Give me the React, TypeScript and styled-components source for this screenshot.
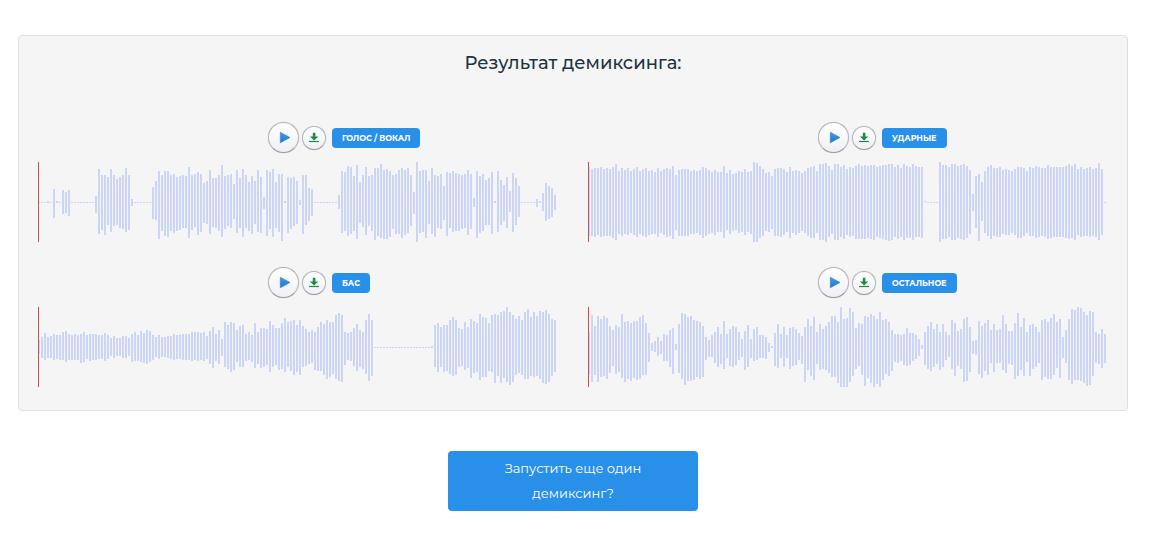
import React from "react";
import styled, { createGlobalStyle } from "styled-components";

const GlobalStyle = createGlobalStyle`
  *, *::before, *::after { box-sizing: border-box; }
  body {
    margin: 0;
    background: #ffffff;
    color: #1e333f;
    font-family: Montserrat, Inter, "Open Sans", sans-serif;
  }
`;

const Page = styled.main`
  display: flex;
  flex-direction: column;
  gap: 40px;
  padding: 35px 38px 22px 18px;
`;

const Panel = styled.section`
  padding: 14px 4px 23px;
  background: #f5f5f5;
  border: 1px solid #e0e0e0;
  border-radius: 4px;
`;

const Title = styled.h1`
  margin: 0 0 46px;
  font-size: 18px;
  font-weight: 500;
  line-height: 26px;
  text-align: center;
`;

const Tracks = styled.div`
  display: grid;
  grid-template-columns: repeat(2, minmax(0, 1fr));
  row-gap: 25px;
`;

const TrackCell = styled.article`
  padding: 0 15px;
`;

const Controls = styled.div`
  display: flex;
  align-items: center;
  height: 31px;
  margin: 0 0 9px calc(50% - 30px);
`;

const RoundButton = styled.button<{ $size: number; $gap: number }>`
  display: flex;
  align-items: center;
  justify-content: center;
  flex: none;
  width: ${(p) => p.$size}px;
  height: ${(p) => p.$size}px;
  margin-right: ${(p) => p.$gap}px;
  padding: 0;
  border: 1px solid #b4b4b6;
  border-bottom-color: #98989a;
  border-radius: 50%;
  background: linear-gradient(#ffffff, #eef0f4);
  box-shadow: 0 0 1px #c0c0c0;
  cursor: pointer;

  svg {
    flex: none;
  }
`;

const Badge = styled.h2`
  margin: 0;
  padding: 0 10px;
  border-radius: 4px;
  background: #2990ea;
  color: #ffffff;
  font-size: 8px;
  font-weight: 700;
  line-height: 20px;
  text-transform: uppercase;
  white-space: nowrap;
`;

const WaveSvg = styled.svg`
  display: block;
  max-width: 100%;
`;

const RestartButton = styled.button`
  align-self: center;
  width: 250px;
  padding: 5px 40px;
  border: 0;
  border-radius: 4px;
  background: #2990ea;
  color: #ffffff;
  font-family: inherit;
  font-size: 13px;
  font-weight: 400;
  line-height: 25px;
  cursor: pointer;
`;

/* Peaks are "above/below" pixel heights round the centre line; "*n" repeats a peak. */
const voice = `0/1*3 1/1 0/1 13/16 1/1 0/1 12/12 10/11 12/14 0/1*8 6/11 33/32 27/28 27/33 25/23 33/30 27/24 23/23 25/26 27/27 34/30 27/28 3/4 0/1*6
15/17 21/18 31/37 27/29 31/34 31/35 27/29 28/31 25/29 26/28 27/26 26/26 35/36 27/28 28/25 30/33 28/30 19/21 21/22 32/32
24/25 24/26 27/29 37/35 26/27 27/24 28/26 18/17 32/31 24/26 33/35 27/26 20/29 26/32 21/22 32/30 25/31 5/7 32/34 30/27 33/35 20/26 28/30 28/39 1/1
25/31 24/27 25/24 21/22 2/3 27/32 27/23 14/19 13/14 0/1*8 7/7 31/31 30/29 36/34 35/32 26/29 37/37 20/21 27/25 35/33 26/24 27/29 34/38 34/34 38/36 32/37
33/37 31/35 27/27 28/32 32/32 34/36 32/33 34/31 27/24 10/12 40/40 31/31 32/30 32/36 21/22 34/32 27/35 26/26 28/27 16/18 30/34 29/26 31/30 29/29 28/29 27/27 28/26 32/33 28/27 4/5
31/36 26/31 28/29 22/23 24/23 30/32 1/1 31/30 22/23 17/19 25/26 11/10 29/30 24/23 16/15 0/1*5 3/5 1/1 9/9 19/19 16/17 14/15 7/8`;

const drums = `35/34 33/34 34/35 34/33 35/35 33/34 34/34 33/34 35/36 38/38 31/32 34/34 32/32 34/33 31/31 33/33 35/35 31/32 33/34 34/35 31/33 32/32 30/32 34/35 31/31 33/33 34/35 33/34 36/37 27/28
32/34 33/34*3 31/32 32/32 31/31 32/33 35/36 34/34 32/32 30/31 32/33 30/30*2 36/36 29/28 32/32 28/29 29/28 31/31 30/30 33/33 30/30 31/32 40/40 39/40 36/36 33/34 29/29 30/30 26/27
33/34 34/34 34/35 33/33 30/30 35/36 31/31 32/33 31/31 29/29 31/31 34/34 35/36 36/36 31/31 38/38*2 39/40 36/35 32/32 38/38*2 35/35 37/37 33/33
35/35 34/34 36/37 38/37 36/37 37/37 36/36 37/37 37/38 35/35 36/36 37/37 37/38 38/39 38/38 35/35 37/37 34/35 38/38 36/36 35/36 38/38 36/35 35/35 35/36 1/0 0/1*4
40/40 37/37*2 35/35 38/38*2 36/36 37/37 38/38 36/36 32/32 8/9 26/26 28/39 20/19 31/31 35/34 37/37 34/34 34/35 35/35 32/32 33/33 32/33 31/31 33/33 35/36*2 34/34 31/31
35/34 34/34 36/36 35/35 34/34 34/35 37/37 35/36 35/35*4 36/36 38/37 36/36 38/38 33/33 35/35 33/34 34/34 35/35 33/34 34/35 39/38 33/33 0/1`;

const bass = `7/7 10/11 14/13 10/11 11/11 13/13 12/12 12/13 15/13 16/15 13/13 12/13 13/13 12/13 13/16 15/15 12/12 13/14 13/13*2 12/12*2 14/14 12/12 9/9 11/11 9/9*2 11/11*2 9/9
13/15 15/14 12/14 16/15 14/16 17/17 16/15 12/13 10/10 12/12 10/10*2 11/11 11/12 13/13 12/12*2 13/13*3 15/14 15/13 15/14 14/13 15/14 11/12 16/17 20/21 13/14 17/17 8/9
25/20 22/22 25/25 24/23 17/15 21/20 22/20 13/14 15/13 12/15 24/21 15/17 19/21 19/20 18/18 26/25 22/20 19/18 19/23 24/22 29/25 25/20 26/24 27/28
22/25 27/28 21/20 18/19 15/17 17/16 15/23 20/24 25/24 23/28 27/32 25/30 25/27 32/32 34/34 32/35 15/18 14/13 15/14 19/19 23/24 17/20 15/22 27/27 33/34 27/29 0/1*19 1/1
22/20 24/25 20/20 22/25 22/24 27/27 30/29 27/28 19/20 18/19 25/23 20/21 28/31 26/26 24/25 33/33 30/30 29/30 24/24 32/25 33/36 32/29 35/36 36/31 40/35 35/38 32/35
28/28 31/26 27/28 35/32 38/32 30/29 35/30 31/29 36/32 35/36 37/37 33/35 28/29 27/25`;

const other = `15/28 32/35 21/28 31/35 28/30 31/29 29/32 21/26 17/19 22/27 20/25 33/31 25/35 26/32 24/34 26/31 26/33 30/32 32/28 24/28 14/15 4/4 6/5 10/9 6/7 13/14 12/14 17/20 19/27 3/3
23/26 34/32 33/38 30/34 31/34 27/33 26/30 25/32 21/30 10/13 7/10 12/10 15/16 20/20 13/17 26/22 13/11 18/19 21/20 20/18 15/13 8/10 16/23 22/20 8/11 18/14 20/13 12/11*2 10/12 4/5 1/1
14/19 23/21 13/11 20/20 12/11 19/22 20/19 18/18 14/13 11/17 20/35 28/23 21/29 30/33 15/17 23/23 18/22 21/23 25/26 31/30*2 25/36 40/40 28/40 29/40
39/35 35/29 19/22 24/19 23/28 31/39 30/31 33/36 31/40 28/37 35/40 27/33 28/27 25/29 17/24 13/15 13/16 12/14 13/18 19/19 14/18 14/14 12/12 8/9 2/2
15/18 21/22 25/24 18/20 23/17 15/23 23/20 15/13 12/10 27/22 24/29 16/19 18/22 28/35 30/34 20/25 6/7 7/8 26/27 21/31 24/24 27/28 17/16 23/25 17/16 18/16 32/23 23/26 16/17 16/18
24/32 34/29 20/23 29/29 15/15 22/29 23/22 20/20 15/16 27/33 28/30 25/32 29/32 33/28 25/21 28/31 10/11 17/16 28/33 38/37 37/33 40/33 39/34 35/36 32/39 36/38 35/29 15/16 13/17 18/21 13/16`;

const tracks = [
  { name: "Голос / Вокал", peaks: voice },
  { name: "Ударные", peaks: drums },
  { name: "Бас", peaks: bass },
  { name: "Остальное", peaks: other },
];

function parsePeaks(source: string): Array<[number, number]> {
  return source.split(/\s+/).flatMap((token) => {
    const [peak, count = "1"] = token.split("*");
    const [up, down] = peak.split("/").map(Number);
    return Array.from({ length: Number(count) }, (): [number, number] => [up, down]);
  });
}

function Waveform({ peaks, name }: { peaks: string; name: string }) {
  return (
    <WaveSvg width="520" height="80" viewBox="0 0 520 80" role="img" aria-label={name} shapeRendering="crispEdges">
      {parsePeaks(peaks).map(([up, down], i) => (
        <rect key={i} x={i * 3} y={40 - up} width="2" height={up + down} fill="#cad5f8" />
      ))}
      <rect x="0" y="0" width="1" height="80" fill="#cb4f4a" />
    </WaveSvg>
  );
}

function PlayIcon() {
  return (
    <svg width="31" height="31" viewBox="0 0 31 31" aria-hidden="true">
      <defs>
        <linearGradient id="play-fill" x1="0" y1="0" x2="0" y2="1">
          <stop offset="0" stopColor="#4a9be6" />
          <stop offset="1" stopColor="#1f74cc" />
        </linearGradient>
      </defs>
      <path d="M12.3 10.2v10.6l9.7-5.3z" fill="url(#play-fill)" stroke="#2b7fd0" strokeWidth="0.6" />
    </svg>
  );
}

function DownloadIcon() {
  return (
    <svg width="24" height="24" viewBox="0 0 24 24" aria-hidden="true">
      <path d="M10.8 6.8h2.6v3.8h2.9l-4.2 4-4.2-4h2.9z" fill="#218a48" />
      <path d="M7 15.5h10" stroke="#218a48" strokeWidth="1.2" />
    </svg>
  );
}

export default function App() {
  return (
    <>
      <GlobalStyle />
      <Page>
        <Panel>
          <Title>Результат демиксинга:</Title>
          <Tracks>
            {tracks.map(({ name, peaks }) => (
              <TrackCell key={name}>
                <Controls>
                  <RoundButton $size={31} $gap={3} type="button" aria-label={`Слушать: ${name}`}>
                    <PlayIcon />
                  </RoundButton>
                  <RoundButton $size={24} $gap={6} type="button" aria-label={`Скачать: ${name}`}>
                    <DownloadIcon />
                  </RoundButton>
                  <Badge>{name}</Badge>
                </Controls>
                <Waveform peaks={peaks} name={name} />
              </TrackCell>
            ))}
          </Tracks>
        </Panel>
        <RestartButton type="button">Запустить еще один демиксинг?</RestartButton>
      </Page>
    </>
  );
}
